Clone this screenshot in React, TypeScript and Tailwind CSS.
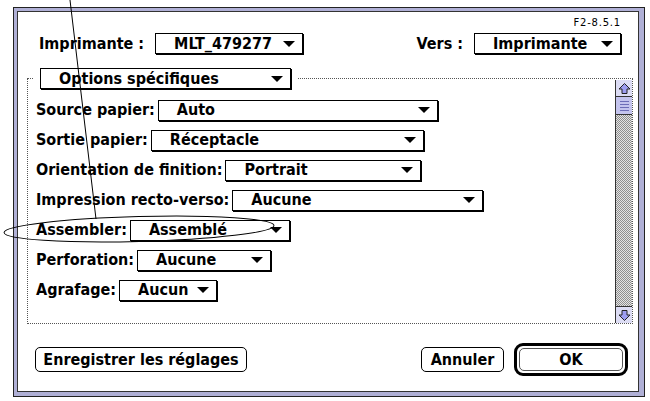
const rows = [
  { label: "Source papier:", value: "Auto", w: "w-[280px]" },
  { label: "Sortie papier:", value: "Réceptacle", w: "w-[273px]" },
  { label: "Orientation de finition:", value: "Portrait", w: "w-[196px]" },
  { label: "Impression recto-verso:", value: "Aucune", w: "w-[251px]" },
  { label: "Assembler:", value: "Assemblé", w: "w-[160px]" },
  { label: "Perforation:", value: "Aucune", w: "w-[134px]" },
  { label: "Agrafage:", value: "Aucun", w: "w-[98px]" },
];

function Tri() {
  return (
    <svg width="12" height="6" viewBox="0 0 12 6" className="shrink-0">
      <polygon points="0,0 12,0 6,6" fill="#000" />
    </svg>
  );
}

function Popup({ value, className }: { value: string; className: string }) {
  return (
    <div
      className={`flex h-[21px] shrink-0 items-center justify-between border border-black bg-white pl-[18px] pr-[7px] shadow-[1px_1px_0_#000] ${className}`}
    >
      <span className="leading-none">{value}</span>
      <Tri />
    </div>
  );
}

function Arrow({ down }: { down?: boolean }) {
  return (
    <svg width="13" height="13" viewBox="0 0 13 13" className={down ? "rotate-180" : ""}>
      <path d="M6.5 1.5 L12 7 L9 7 L9 11.5 L4 11.5 L4 7 L1 7 Z" fill="#9d9df0" stroke="#222" strokeWidth="1" />
    </svg>
  );
}

function Scrollbar() {
  return (
    <div className="mt-[1px] flex w-[17px] flex-col border-l border-[#333]">
      <div className="flex h-[17px] items-center justify-center border-b border-[#333] bg-[#dcdcf4]">
        <Arrow />
      </div>
      <div className="flex h-[18px] flex-col items-center justify-center gap-[2px] border-b border-[#333] bg-[#c4c4ee]">
        <div className="h-px w-[9px] bg-[#6d6db8]" />
        <div className="h-px w-[9px] bg-[#6d6db8]" />
        <div className="h-px w-[9px] bg-[#6d6db8]" />
        <div className="h-px w-[9px] bg-[#6d6db8]" />
      </div>
      <div className="flex-1 bg-[image:repeating-conic-gradient(#8f8f8f_0_25%,#e4e4e4_0_50%)] bg-[length:2px_2px]" />
      <div className="flex h-[17px] items-center justify-center border-t border-[#333] bg-[#dcdcf4]">
        <Arrow down />
      </div>
    </div>
  );
}

export default function App() {
  return (
    <div className="relative h-[401px] w-[650px] overflow-hidden bg-white pl-[13px] pt-[7px] font-['DejaVu_Sans_Condensed','DejaVu_Sans',sans-serif] text-[16px] font-bold leading-none text-black font-stretch-condensed">
      <div className="h-[390px] w-[632px] border border-[#222] bg-[#b0b0d6] pb-[4px] pl-[3px] pr-[5px] pt-[3px]">
        <div className="flex h-full flex-col border border-[#333] bg-white">
          <div className="pr-[17px] pt-[4px] text-right font-['DejaVu_Sans',sans-serif] text-[10px] font-normal leading-[13px] tracking-[0.8px] font-stretch-normal">
            F2-8.5.1
          </div>

          <div className="mt-[4px] flex items-center justify-between pl-[21px] pr-[17px]">
            <div className="flex items-center gap-[11px]">
              <span>Imprimante :</span>
              <Popup value="MLT_479277" className="w-[148px]" />
            </div>
            <div className="flex items-center gap-[11px]">
              <span>Vers :</span>
              <Popup value="Imprimante" className="w-[147px]" />
            </div>
          </div>

          <div className="ml-[9px] mr-[5px] mt-[24px] flex h-[246px] border border-dotted border-[#555]">
            <div className="flex-1 pl-[8px]">
              <div className="-ml-[3px] -mt-[11px] flex w-fit bg-white pl-[7px] pr-[6px]">
                <Popup value="Options spécifiques" className="w-[251px]" />
              </div>
              <div className="mt-[6px] flex flex-col">
                {rows.map((r) => (
                  <div key={r.label} className="flex h-[30px] items-center gap-[3px]">
                    <span className="whitespace-nowrap">{r.label}</span>
                    <Popup value={r.value} className={r.w} />
                  </div>
                ))}
              </div>
            </div>
            <Scrollbar />
          </div>

          <div className="mt-[19px] flex items-center justify-between pl-[17px] pr-[10px]">
            <button className="h-[25px] w-[212px] rounded-[5px] border border-black bg-white leading-none">
              Enregistrer les réglages
            </button>
            <div className="flex items-center gap-[10px]">
              <button className="h-[25px] w-[83px] rounded-[5px] border border-black bg-white leading-none">
                Annuler
              </button>
              <div className="rounded-[9px] border-[3px] border-black p-[2px]">
                <button className="h-[23px] w-[104px] rounded-[5px] border border-[#555] bg-white leading-none">
                  OK
                </button>
              </div>
            </div>
          </div>
        </div>
      </div>

      <svg
        className="pointer-events-none absolute left-0 top-0"
        width="650"
        height="401"
        viewBox="0 0 650 401"
      >
        <line x1="70" y1="0" x2="96" y2="219" stroke="#000" strokeWidth="1" />
        <ellipse cx="139" cy="229" rx="135" ry="12.5" transform="rotate(-1.5 139 229)" fill="none" stroke="#000" strokeWidth="1" />
      </svg>
    </div>
  );
}
